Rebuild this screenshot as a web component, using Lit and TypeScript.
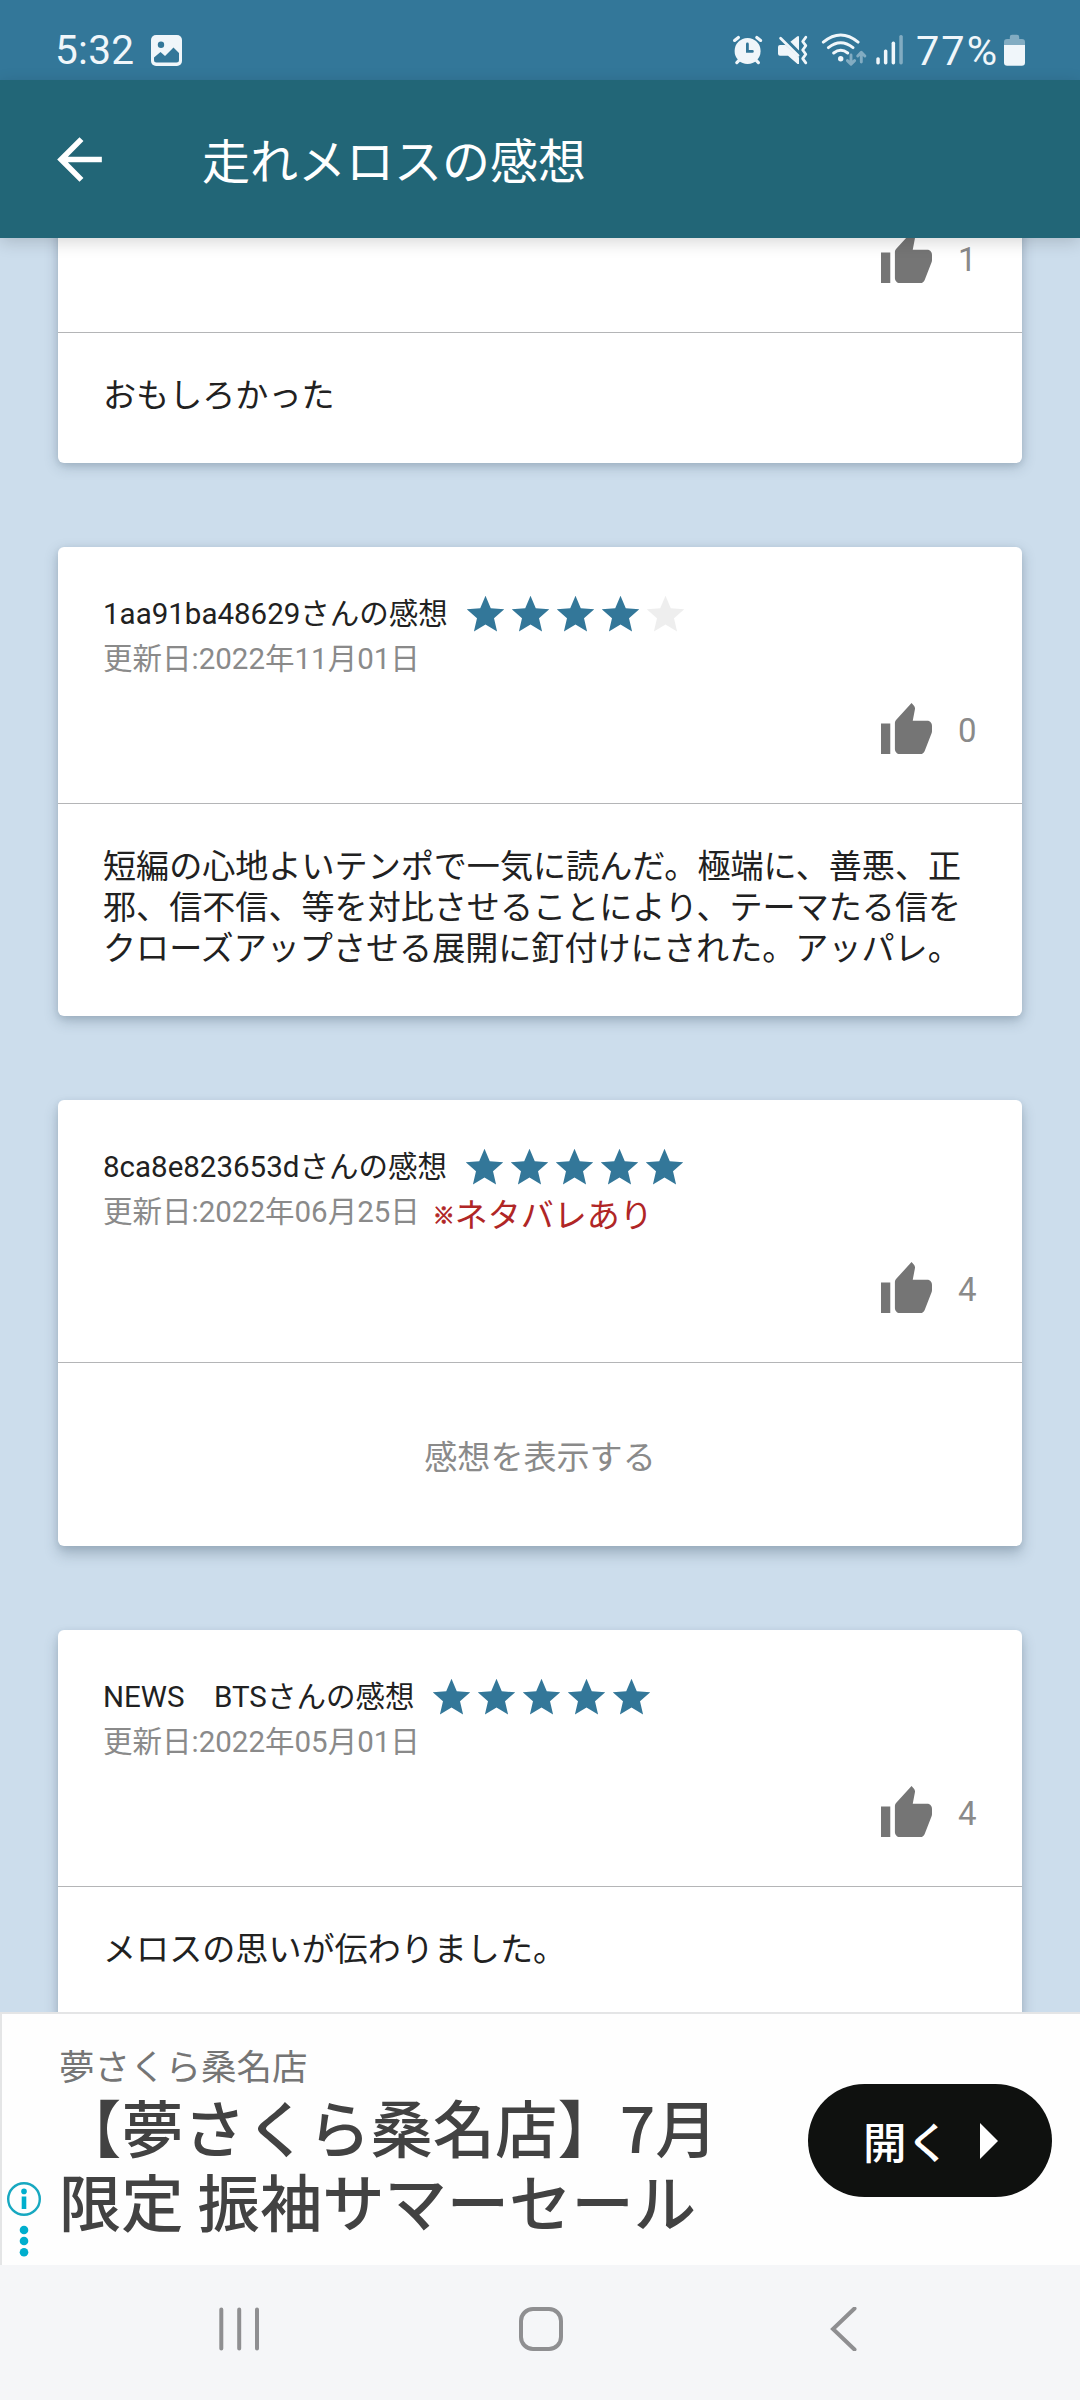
import { LitElement, html, css, svg, nothing } from "lit";
import { customElement, property } from "lit/decorators.js";

interface Review {
  name?: string;
  date?: string;
  stars?: number;
  likes: number;
  body?: string[];
  spoiler?: boolean;
  depth: number;
}

const REVIEWS: Review[] = [
  { likes: 1, body: ["おもしろかった"], depth: 3 },
  {
    name: "1aa91ba48629さんの感想",
    date: "2022年11月01日",
    stars: 4,
    likes: 0,
    body: [
      "短編の心地よいテンポで一気に読んだ。極端に、善悪、正",
      "邪、信不信、等を対比させることにより、テーマたる信を",
      "クローズアップさせる展開に釘付けにされた。アッパレ。",
    ],
    depth: 5,
  },
  { name: "8ca8e823653dさんの感想", date: "2022年06月25日", stars: 5, likes: 4, spoiler: true, depth: 8 },
  { name: "NEWS　BTSさんの感想", date: "2022年05月01日", stars: 5, likes: 4, body: ["メロスの思いが伝わりました。"], depth: 8 },
];

@customElement("status-bar")
export class StatusBar extends LitElement {
  static styles = css`
    :host {
      display: flex;
      box-sizing: border-box;
      height: 80px;
      padding: 33px 55px 0 55px;
      background: #337799;
      color: #f0f6fa;
      font: 400 40.6px/35px Roboto, sans-serif;
    }
    svg { display: block; height: 34px; flex: none; }
    .time { width: 96px; letter-spacing: 0.3px; }
    .grow { flex: 1; }
    .alarm { width: 32px; margin-right: 13px; }
    .mute { width: 31px; margin-right: 13px; }
    .wifi { width: 47px; margin-right: 8px; }
    .signal { width: 27px; margin-right: 13px; }
    .percent { width: 88px; font-size: 41.5px; letter-spacing: 2px; white-space: nowrap; }
    .battery { width: 21px; }
    .picture { width: 31px; }
  `;
  render() {
    return html`
      <span class="time">5:32</span>
      <svg class="picture" viewBox="0 0 31 34">
        <rect y="2" width="31" height="31" rx="5" fill="#f0f6fa" />
        <circle cx="10" cy="11.8" r="3.2" fill="#337799" />
        <path d="M3 24.5 L9.5 19 L14 23 L22.5 14.5 L28 20 V27 Q28 29.5 25.5 29.5 H5.5 Q3 29.5 3 27Z" fill="#337799" />
      </svg>
      <span class="grow"></span>
      <svg class="alarm" viewBox="0 0 32 34" fill="none" stroke="#f0f6fa" stroke-width="3.2" stroke-linecap="round">
        <circle cx="15.6" cy="18" r="13" fill="#f0f6fa" stroke="none" />
        <path d="M2.6 7.4 L6.4 4.4 M24.8 4.4 L28.6 7.4 M4.8 29.6 L8 26.4 M26.4 29.6 L23.2 26.4" />
        <path d="M15.4 11 V18.4 H20.4" stroke="#337799" stroke-width="2.8" />
      </svg>
      <svg class="mute" viewBox="0 0 31 34" fill="#f0f6fa" stroke="#f0f6fa">
        <path d="M3 12 H8.5 L22 24.5 V31 H20.5 L11 22.7 H3 Q1 22.7 1 20.7 V14 Q1 12 3 12Z" stroke="none" />
        <path d="M3.6 5.2 L21 22.6" stroke-width="2.8" stroke-linecap="round" />
        <path d="M13.4 8.8 L20.4 3.2 H22 V17.4Z" stroke="none" />
        <path d="M28.8 4.2 L25.7 8.5 L28.8 12.7 L25.7 17 L28.8 21.3 L25.7 25.6 L28.8 29.8" fill="none" stroke-width="2.8" stroke-linecap="round" stroke-linejoin="round" />
      </svg>
      <svg class="wifi" viewBox="0 0 47 34" fill="none" stroke="#f0f6fa" stroke-width="2.9" stroke-linecap="round">
        <path d="M2.3 9.1 Q19.7 -5.1 37.1 9.1 M7.4 14.6 Q19.7 4.8 32 14.6 M12.7 20 Q19.7 14.4 26.7 20" />
        <circle cx="19.7" cy="25.7" r="2.7" fill="#f0f6fa" stroke="none" />
        <path d="M30 22 V31 M26.4 27.6 L30 31.2 L33.6 27.6 M40.3 29 V19.6 M36.7 23 L40.3 19.4 L43.9 23" opacity=".42" stroke-linejoin="round" />
      </svg>
      <svg class="signal" viewBox="0 0 27 34" fill="#f0f6fa">
        <rect x=".3" y="24.2" width="3.5" height="7.2" rx="1.6" />
        <rect x="7.9" y="16.4" width="3.5" height="15" rx="1.6" />
        <rect x="15.6" y="8.6" width="3.5" height="22.8" rx="1.6" />
        <rect x="23.3" y="2" width="3.5" height="29.4" rx="1.6" opacity=".42" />
      </svg>
      <span class="percent">77%</span>
      <svg class="battery" viewBox="0 0 21 34" fill="#f0f6fa">
        <path d="M0 12 V9 Q0 6 3 6 H5.8 V4 Q5.8 1.7 8 1.7 H13 Q15.2 1.7 15.2 4 V6 H18 Q21 6 21 9 V12Z" opacity=".42" />
        <path d="M0 12 H21 V29.5 Q21 32.7 17.8 32.7 H3.2 Q0 32.7 0 29.5Z" />
      </svg>
    `;
  }
}

@customElement("review-card")
export class ReviewCard extends LitElement {
  @property({ attribute: false }) review!: Review;

  static styles = css`
    :host {
      display: block;
      border-radius: 6px;
      background: #fff;
      font-family: Roboto, "Noto Sans CJK JP", sans-serif;
      color: #212121;
      box-shadow: 0 var(--depth) 14px rgba(40, 60, 80, 0.26), 0 2px 6px rgba(40, 60, 80, 0.1);
    }
    .head { padding: 45px 45px 30px; border-bottom: 1px solid #b4b5b7; }
    .head.bare { padding-top: 0; }
    .row { display: flex; height: 45px; line-height: 45px; font-size: 29.5px; white-space: nowrap; }
    .row.tall { height: 51px; }
    .date { color: #8a8a8a; }
    .stars { display: flex; margin-left: 15px; }
    .stars svg { width: 45px; height: 45px; fill: #337799; }
    .stars .off { fill: #eeeeee; }
    .spoiler { display: flex; margin-left: 13px; padding-top: 2px; color: #b02626; font: 400 33px/43px "Noto Sans CJK JP", sans-serif; }
    .mark { font-size: 22px; width: 22px; -webkit-text-stroke: 0.8px #b02626; }
    .like { display: flex; justify-content: flex-end; align-items: center; height: 90px; margin-top: 1px; font-size: 33px; color: #8a8a8a; }
    .like svg { width: 51px; height: 51px; margin-right: 26px; fill: #757575; }
    .like span { width: 19px; line-height: 40px; margin-top: 5px; }
    .body { padding: 42px 45px 47px; font-size: 33.1px; line-height: 41px; white-space: nowrap; }
    .reveal { display: flex; align-items: center; justify-content: center; height: 183px; font-size: 33.1px; color: #8a8a8a; }
  `;

  renderAuthor(r: Review) {
    return html`
      <div class="row">
        <span>${r.name}</span>
        <span class="stars">
          ${[1, 2, 3, 4, 5].map(
            (n) => html`<svg class=${n > (r.stars ?? 0) ? "off" : "on"} viewBox="0 0 24 24">
              ${svg`<path d="M12 17.27L18.18 21l-1.64-7.03L22 9.24l-7.19-.61L12 2 9.19 8.63 2 9.24l5.46 4.73L5.82 21z"/>`}
            </svg>`
          )}
        </span>
      </div>
      <div class="row ${r.spoiler ? "tall" : ""}">
        <span class="date">更新日:${r.date}</span>
        ${r.spoiler ? html`<span class="spoiler"><span class="mark">※</span><span>ネタバレあり</span></span>` : nothing}
      </div>
    `;
  }

  render() {
    const r = this.review;
    return html`
      <div class="head ${r.name ? "" : "bare"}">
        ${r.name ? this.renderAuthor(r) : nothing}
        <div class="like">
          <svg viewBox="1 1 22 20" preserveAspectRatio="none">
            <path d="M1 21h4V9H1v12zm22-11c0-1.1-.9-2-2-2h-6.31l.95-4.57.03-.32c0-.41-.17-.79-.44-1.06L14.17 1 7.59 7.59C7.22 7.95 7 8.45 7 9v10c0 1.1.9 2 2 2h9c.83 0 1.54-.5 1.84-1.22l3.02-7.05c.09-.23.14-.47.14-.73v-2z" />
          </svg>
          <span>${r.likes}</span>
        </div>
      </div>
      ${r.body
        ? html`<div class="body">${r.body.map((line) => html`<div>${line}</div>`)}</div>`
        : html`<div class="reveal">感想を表示する</div>`}
    `;
  }
}

@customElement("ad-banner")
export class AdBanner extends LitElement {
  static styles = css`
    :host {
      display: flex;
      box-sizing: border-box;
      height: 253px;
      border-top: 2px solid #e4e5e6;
      border-left: 2px solid #e4e5e6;
      background: #fefefe;
      font-family: "Noto Sans CJK JP", sans-serif;
    }
    .choices { width: 44px; padding: 167px 0 0 4px; box-sizing: border-box; flex: none; }
    .choices svg { display: block; }
    .copy { flex: 1; padding: 27px 0 0 13px; white-space: nowrap; }
    .shop { font-size: 35.5px; line-height: 48px; color: #757575; }
    .title { font-size: 62.3px; line-height: 74px; font-weight: 500; color: #424242; }
    .open {
      display: flex;
      box-sizing: border-box;
      width: 244px;
      height: 113px;
      margin: 70px 28px 0 0;
      padding: 0 54px 0 55px;
      align-items: center;
      justify-content: space-between;
      border-radius: 57px;
      background: #0f110f;
      color: #fff;
      font-size: 43.5px;
      font-weight: 500;
      line-height: 60px;
    }
  `;
  render() {
    return html`
      <div class="choices">
        <svg width="36" height="78" viewBox="0 0 36 78" fill="#00aecd">
          <circle cx="18" cy="18" r="15.8" fill="none" stroke="#17a8c0" stroke-width="2.4" />
          <circle cx="18" cy="10.4" r="2.8" />
          <rect x="15.7" y="15.5" width="4.6" height="12.5" />
          <circle cx="18" cy="49" r="4.3" />
          <circle cx="18" cy="60" r="4.3" />
          <circle cx="18" cy="71.3" r="4.3" />
        </svg>
      </div>
      <div class="copy">
        <div class="shop">夢さくら桑名店</div>
        <div class="title">【夢さくら桑名店】7月</div>
        <div class="title">限定 振袖サマーセール</div>
      </div>
      <div class="open">
        <span>開く</span>
        <svg width="18" height="36" viewBox="0 0 18 36"><path d="M0 0 L18 18 L0 36Z" fill="#fff" /></svg>
      </div>
    `;
  }
}

@customElement("app-root")
export class AppRoot extends LitElement {
  static styles = css`
    :host {
      display: flex;
      flex-direction: column;
      width: 1080px;
      height: 2400px;
      overflow: hidden;
      background: #ccddec;
    }
    .bar {
      display: flex;
      align-items: center;
      box-sizing: border-box;
      height: 158px;
      padding-left: 46px;
      background: #226677;
      color: #fff;
      font: 400 48px/60px "Noto Sans CJK JP", sans-serif;
      z-index: 1;
      box-shadow: 0 4px 16px rgba(0, 0, 0, 0.16);
    }
    .bar svg { width: 67px; height: 67px; margin-right: 89px; fill: #fff; }
    .bar span { margin-bottom: 3px; }
    .list { display: flex; flex-direction: column; gap: 84px; height: 1774px; padding: 0 58px; box-sizing: border-box; overflow: hidden; }
    .list review-card { flex: none; }
    .list review-card:first-child { margin-top: -27px; }
    .nav { display: flex; height: 135px; padding: 42px 0 0 219px; box-sizing: border-box; background: #f5f6f8; }
    .nav svg { display: block; fill: none; stroke: #8f8f91; stroke-width: 4; stroke-linecap: round; }
    .recents { margin-right: 259px; }
    .home { margin-right: 267px; }
  `;
  render() {
    return html`
      <status-bar></status-bar>
      <div class="bar">
        <svg viewBox="0 0 24 24"><path d="M20 11H7.83l5.59-5.59L12 4l-8 8 8 8 1.41-1.41L7.83 13H20v-2z" /></svg>
        <span>走れメロスの感想</span>
      </div>
      <div class="list">
        ${REVIEWS.map((r) => html`<review-card style="--depth:${r.depth}px" .review=${r}></review-card>`)}
      </div>
      <ad-banner></ad-banner>
      <div class="nav">
        <svg class="recents" width="41" height="44" viewBox="0 0 41 44"><path d="M2.3 2.5 V41.5 M20.2 2.5 V41.5 M38 2.5 V41.5" /></svg>
        <svg class="home" width="44" height="44" viewBox="0 0 44 44"><rect x="2" y="2" width="40" height="40" rx="12" /></svg>
        <svg width="28" height="44" viewBox="0 0 28 44"><path d="M24.5 1.5 L3 22 L24.5 42.5" /></svg>
      </div>
    `;
  }
}
